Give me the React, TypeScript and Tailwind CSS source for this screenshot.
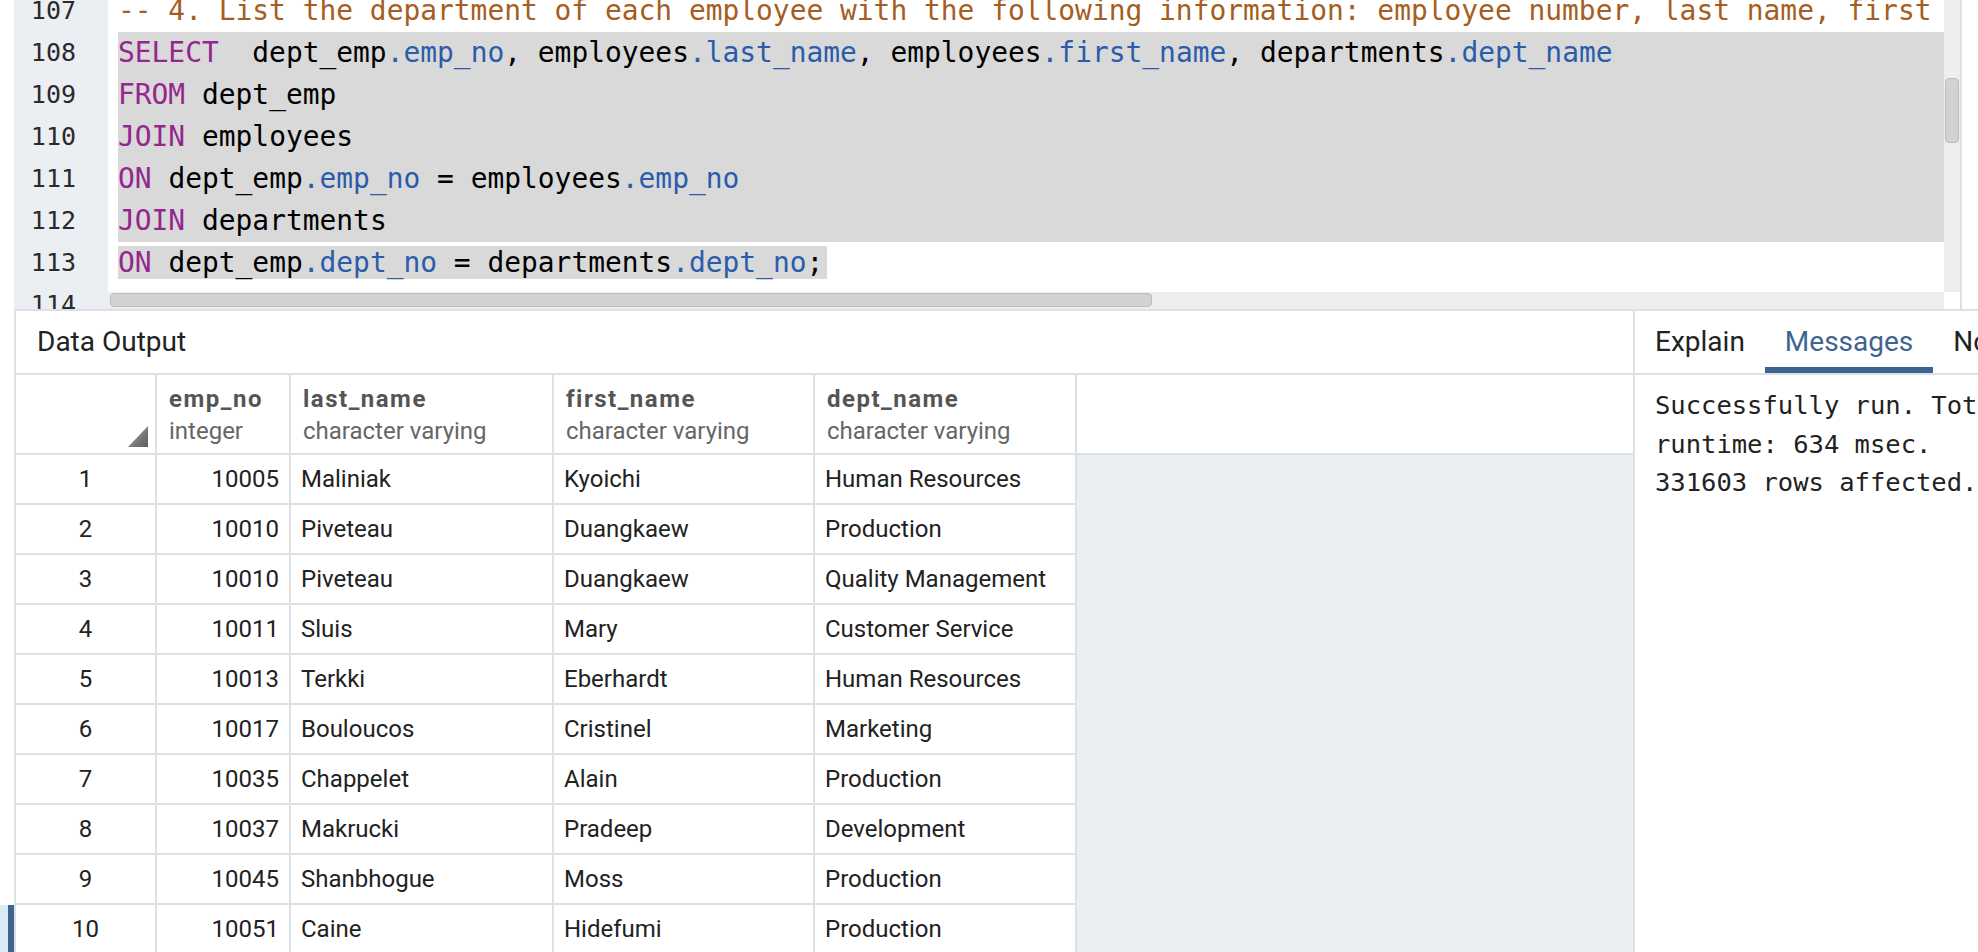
import React from "react";

type Kind = "k" | "p" | "c" | "t";
type Tok = [string, Kind];

const tokColor: Record<Kind, string> = {
  k: "text-[#93278f]",
  p: "text-[#2a5caa]",
  c: "text-[#a65d22]",
  t: "text-black",
};

const codeLines: { no: number; toks: Tok[]; sel: "full" | "text" | "none" }[] = [
  {
    no: 107,
    sel: "none",
    toks: [
      [
        "-- 4. List the department of each employee with the following information: employee number, last name, first name, and department name.",
        "c",
      ],
    ],
  },
  {
    no: 108,
    sel: "full",
    toks: [
      ["SELECT", "k"],
      ["  dept_emp", "t"],
      [".emp_no", "p"],
      [", employees", "t"],
      [".last_name", "p"],
      [", employees", "t"],
      [".first_name", "p"],
      [", departments", "t"],
      [".dept_name", "p"],
    ],
  },
  { no: 109, sel: "full", toks: [["FROM", "k"], [" dept_emp", "t"]] },
  { no: 110, sel: "full", toks: [["JOIN", "k"], [" employees", "t"]] },
  {
    no: 111,
    sel: "full",
    toks: [
      ["ON", "k"],
      [" dept_emp", "t"],
      [".emp_no", "p"],
      [" = employees", "t"],
      [".emp_no", "p"],
    ],
  },
  { no: 112, sel: "full", toks: [["JOIN", "k"], [" departments", "t"]] },
  {
    no: 113,
    sel: "text",
    toks: [
      ["ON", "k"],
      [" dept_emp", "t"],
      [".dept_no", "p"],
      [" = departments", "t"],
      [".dept_no", "p"],
      [";", "t"],
    ],
  },
  { no: 114, sel: "none", toks: [] },
];

const rows: [number, number, string, string, string][] = [
  [1, 10005, "Maliniak", "Kyoichi", "Human Resources"],
  [2, 10010, "Piveteau", "Duangkaew", "Production"],
  [3, 10010, "Piveteau", "Duangkaew", "Quality Management"],
  [4, 10011, "Sluis", "Mary", "Customer Service"],
  [5, 10013, "Terkki", "Eberhardt", "Human Resources"],
  [6, 10017, "Bouloucos", "Cristinel", "Marketing"],
  [7, 10035, "Chappelet", "Alain", "Production"],
  [8, 10037, "Makrucki", "Pradeep", "Development"],
  [9, 10045, "Shanbhogue", "Moss", "Production"],
  [10, 10051, "Caine", "Hidefumi", "Production"],
];

const columns = [
  { name: "emp_no", type: "integer", w: "w-[134px]" },
  { name: "last_name", type: "character varying", w: "w-[263px]" },
  { name: "first_name", type: "character varying", w: "w-[261px]" },
  { name: "dept_name", type: "character varying", w: "w-[262px]" },
];

function Editor() {
  return (
    <div className="flex h-[311px]">
      <div className="w-[14px] shrink-0" />
      <div className="flex flex-1 border-b-2 border-[#dde1e6]">
        <div className="relative w-[1946px] shrink-0 overflow-hidden font-['DejaVu_Sans_Mono',monospace]">
          <div className="-mt-[10px]">
            {codeLines.map((line) => (
              <div key={line.no} className="flex h-[42px]">
                <div className="w-[94px] shrink-0 bg-[#ebeef3] pr-[32px] text-right text-[25px] leading-[42px] text-[#2a2a2a]">
                  {line.no}
                </div>
                <div className="w-[10px] shrink-0" />
                <div
                  className={
                    "flex-1 overflow-hidden whitespace-pre text-[27.9px] leading-[42px] " +
                    (line.sel === "full" ? "bg-[#d9d9d9]" : "")
                  }
                >
                  <span className={line.sel === "text" ? "bg-[#d9d9d9] pr-[4px]" : ""}>
                    {line.toks.map((t, i) => (
                      <span key={i} className={tokColor[t[1]]}>
                        {t[0]}
                      </span>
                    ))}
                  </span>
                </div>
              </div>
            ))}
          </div>

          {/* vertical scrollbar */}
          <div className="absolute right-0 top-0 bottom-[17px] w-[16px] bg-[#eeeeee]">
            <div className="mx-[1px] mt-[78px] h-[65px] rounded-[4px] border border-[#bdbdbd] bg-[#d2d2d2]" />
          </div>

          {/* horizontal scrollbar */}
          <div className="absolute left-[94px] right-0 bottom-0 flex h-[17px]">
            <div className="flex-1 bg-[#eeeeee] pl-[2px] pt-[1px]">
              <div className="h-[14px] w-[1042px] rounded-[4px] border border-[#bdbdbd] bg-[#d2d2d2]" />
            </div>
            <div className="w-[16px] bg-white" />
          </div>
        </div>
        <div className="w-[2px] shrink-0 bg-[#dde1e6]" />
        <div className="flex-1" />
      </div>
    </div>
  );
}

function DataOutput() {
  return (
    <div className="flex w-[1633px] shrink-0 flex-col">
      <div className="flex h-[64px] shrink-0">
        <div className="w-[14px] shrink-0" />
        <div className="flex flex-1 items-center border-b-2 border-l-2 border-[#dde1e6] pl-[21px] text-[28px] text-[#222]">
          Data Output
        </div>
      </div>

      {/* column header */}
      <div className="flex h-[80px] shrink-0">
        <div className="w-[14px] shrink-0" />
        <div className="flex flex-1 border-b-2 border-l-2 border-[#dde1e6]">
          <div className="relative w-[141px] shrink-0 border-r-2 border-[#dde1e6]">
            <svg
              className="absolute right-[7px] bottom-[6px]"
              width="20"
              height="21"
              viewBox="0 0 20 21"
            >
              <defs>
                <linearGradient id="sortg" x1="0" y1="0" x2="1" y2="1">
                  <stop offset="0" stopColor="#a8a8a8" />
                  <stop offset="1" stopColor="#5a5a5a" />
                </linearGradient>
              </defs>
              <polygon points="20,0 20,21 0,21" fill="url(#sortg)" />
            </svg>
          </div>
          {columns.map((c) => (
            <div
              key={c.name}
              className={
                c.w +
                " flex shrink-0 flex-col justify-center border-r-2 border-[#dde1e6] pl-[12px] pt-[1px]"
              }
            >
              <div className="text-[24px] font-bold leading-[32px] tracking-[1.5px] text-[#555]">
                {c.name}
              </div>
              <div className="text-[24px] leading-[32px] text-[#666]">{c.type}</div>
            </div>
          ))}
          <div className="flex-1" />
        </div>
      </div>

      {rows.map((r) => {
        const active = r[0] === 10;
        return (
          <div key={r[0]} className="flex h-[50px] shrink-0">
            <div className="flex w-[14px] shrink-0">
              {active && (
                <>
                  <div className="w-[8px] bg-[#dcebf9]" />
                  <div className="w-[6px] bg-[#3d6590]" />
                </>
              )}
            </div>
            <div className="flex flex-1 border-l-2 border-[#dde1e6] text-[24px] text-[#222]">
              <div className="flex w-[141px] shrink-0 items-center justify-center border-b-2 border-r-2 border-[#dde1e6]">
                {r[0]}
              </div>
              <div className="flex w-[134px] shrink-0 items-center justify-end border-b-2 border-r-2 border-[#dde1e6] pr-[10px]">
                {r[1]}
              </div>
              <div className="flex w-[263px] shrink-0 items-center border-b-2 border-r-2 border-[#dde1e6] pl-[10px]">
                {r[2]}
              </div>
              <div className="flex w-[261px] shrink-0 items-center border-b-2 border-r-2 border-[#dde1e6] pl-[10px]">
                {r[3]}
              </div>
              <div className="flex w-[262px] shrink-0 items-center border-b-2 border-r-2 border-[#dde1e6] pl-[10px]">
                {r[4]}
              </div>
              <div className="flex-1 bg-[#ebeef3]" />
            </div>
          </div>
        );
      })}
    </div>
  );
}

function MessagesPanel() {
  const tabs = ["Explain", "Messages", "Notifications"];
  return (
    <div className="flex min-w-0 flex-1 flex-col overflow-hidden border-l-2 border-[#dde1e6]">
      <div className="flex h-[64px] shrink-0 border-b-2 border-[#dde1e6]">
        {tabs.map((t) => (
          <div
            key={t}
            className={
              "relative flex shrink-0 items-center whitespace-nowrap pl-[20px] pr-[20px] text-[28px] " +
              (t === "Messages" ? "text-[#3e6592]" : "text-[#222]")
            }
          >
            {t}
            {t === "Messages" && (
              <div className="absolute bottom-0 left-0 right-0 h-[6px] bg-[#3e6592]" />
            )}
          </div>
        ))}
      </div>
      <div className="whitespace-pre pl-[20px] pt-[11px] font-['DejaVu_Sans_Mono',monospace] text-[25.5px] leading-[38.5px] text-[#222]">
        <div>Successfully run. Total query</div>
        <div>runtime: 634 msec.</div>
        <div>331603 rows affected.</div>
      </div>
    </div>
  );
}

export default function App() {
  return (
    <div className="h-[952px] w-[1978px] overflow-hidden bg-white font-['Roboto',sans-serif]">
      <Editor />
      <div className="flex h-[641px]">
        <DataOutput />
        <MessagesPanel />
      </div>
    </div>
  );
}
